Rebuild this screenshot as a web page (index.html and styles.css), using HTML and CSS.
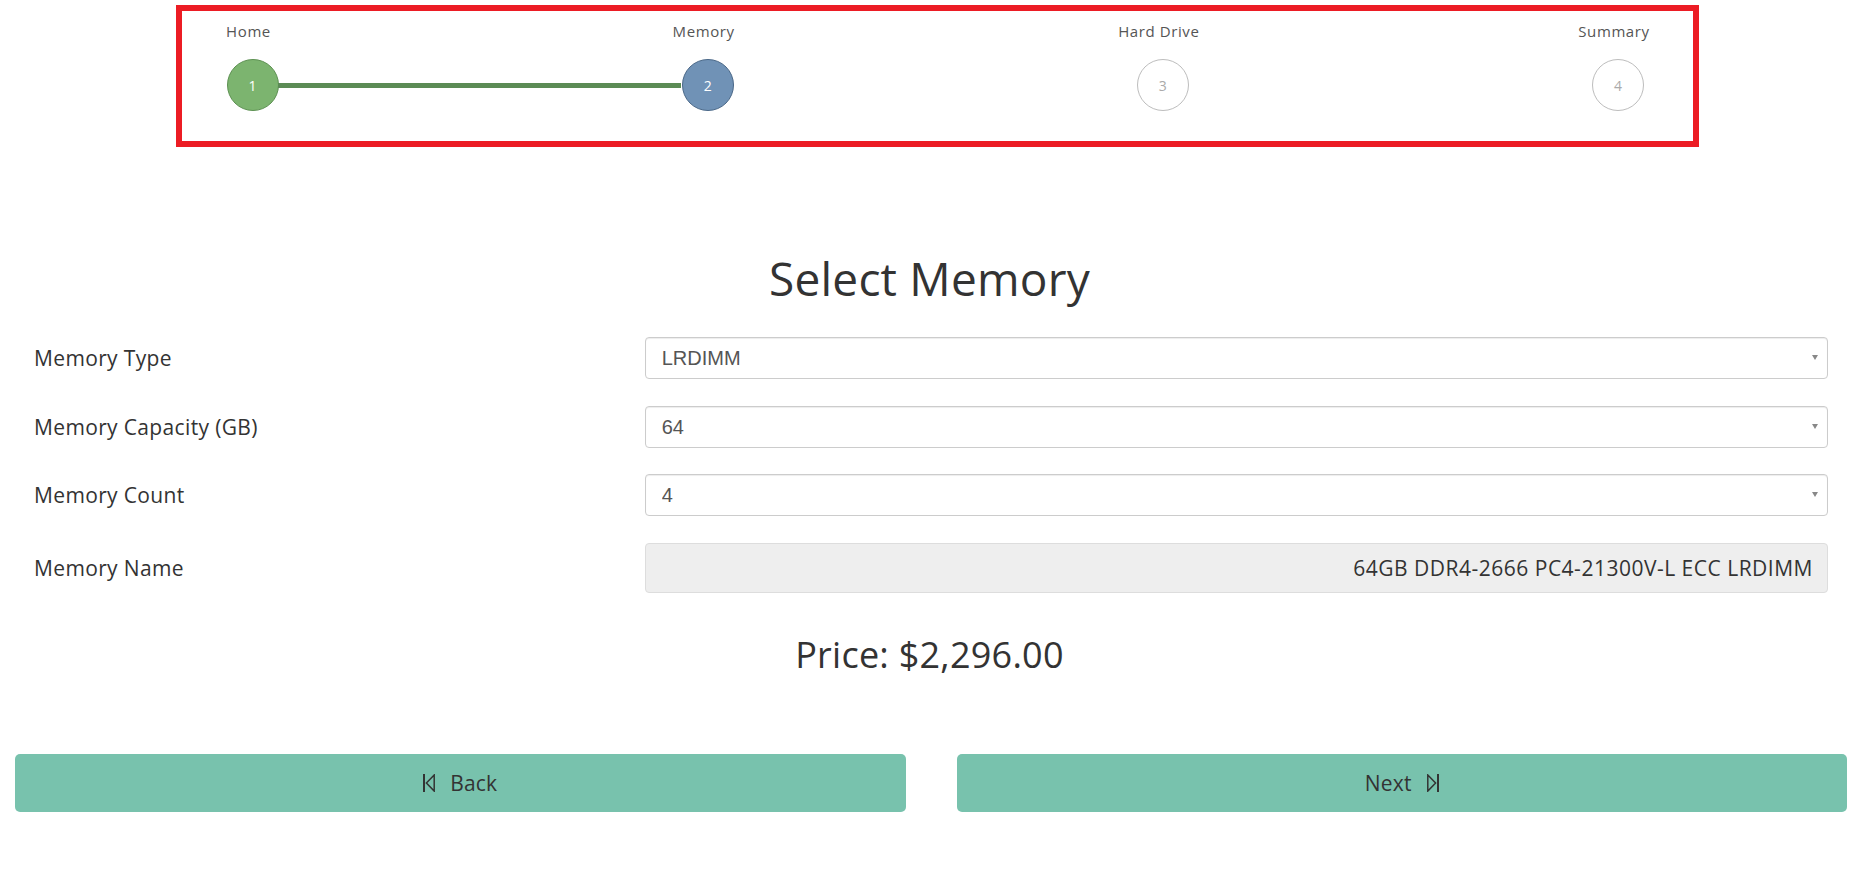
FILE: index.html
```html
<!DOCTYPE html>
<html lang="en">
<head>
<meta charset="utf-8">
<title>Select Memory</title>
<link rel="stylesheet" href="styles.css">
</head>
<body>
  <div class="stepper">
    <div class="step">
      <div class="step-label">Home</div>
      <div class="step-dot step-dot--done step-dot--link">1</div>
    </div>
    <div class="step">
      <div class="step-label">Memory</div>
      <div class="step-dot step-dot--active">2</div>
    </div>
    <div class="step">
      <div class="step-label">Hard Drive</div>
      <div class="step-dot">3</div>
    </div>
    <div class="step">
      <div class="step-label">Summary</div>
      <div class="step-dot">4</div>
    </div>
  </div>

  <h1 class="title">Select Memory</h1>

  <form class="form">
    <div class="field-row">
      <label class="field-label" for="mtype">Memory Type</label>
      <div class="field-cell">
        <div class="select-wrap">
          <select class="select" id="mtype"><option>LRDIMM</option></select>
        </div>
      </div>
    </div>
    <div class="field-row">
      <label class="field-label" for="mcap">Memory Capacity (GB)</label>
      <div class="field-cell">
        <div class="select-wrap">
          <select class="select" id="mcap"><option>64</option></select>
        </div>
      </div>
    </div>
    <div class="field-row">
      <label class="field-label" for="mcount">Memory Count</label>
      <div class="field-cell">
        <div class="select-wrap">
          <select class="select" id="mcount"><option>4</option></select>
        </div>
      </div>
    </div>
    <div class="field-row">
      <label class="field-label">Memory Name</label>
      <div class="field-cell">
        <div class="readonly">64GB DDR4-2666 PC4-21300V-L ECC LRDIMM</div>
      </div>
    </div>
  </form>

  <div class="price">Price: $2,296.00</div>

  <div class="actions">
    <button class="btn" type="button">
      <svg class="btn-icon" width="12" height="18" viewBox="0 0 12 18" fill="none" stroke="#333" stroke-linejoin="miter">
        <line x1="1" y1="0" x2="1" y2="18" stroke-width="2"/>
        <polygon points="11.2,0.9 3.4,9 11.2,17.1" stroke-width="1.5"/>
      </svg>
      <span>Back</span>
    </button>
    <button class="btn" type="button">
      <span>Next</span>
      <svg class="btn-icon" width="12" height="18" viewBox="0 0 12 18" fill="none" stroke="#333" stroke-linejoin="miter">
        <polygon points="0.8,0.9 8.6,9 0.8,17.1" stroke-width="1.5"/>
        <line x1="11" y1="0" x2="11" y2="18" stroke-width="2"/>
      </svg>
    </button>
  </div>
</body>
</html>
```

FILE: styles.css
```css
* {
  box-sizing: border-box;
}

body {
  margin: 0;
  background: #ffffff;
  font-family: "Open Sans", "Liberation Sans", sans-serif;
  color: #333333;
}

/* ---------- stepper ---------- */
.stepper {
  margin: 5px 0 0 176px;
  width: 1523px;
  border: 6px solid #ec1c24;
  padding: 10px 25px 30px 20.5px;
  display: flex;
  justify-content: space-between;
}

.step {
  width: 100px;
  display: flex;
  flex-direction: column;
  align-items: center;
}

.step-label {
  font-size: 15px;
  line-height: 20px;
  letter-spacing: 0.6px;
  padding-right: 8px;
  color: #555555;
  white-space: nowrap;
}

.step-dot {
  position: relative;
  z-index: 1;
  margin-top: 18px;
  width: 52px;
  height: 52px;
  border-radius: 50%;
  border: 1px solid #bdbdbd;
  background: #ffffff;
  color: #aaaaaa;
  font-size: 14px;
  display: flex;
  align-items: center;
  justify-content: center;
}

.step-dot--done {
  background: #7cb46f;
  border-color: #5d9152;
  color: #ffffff;
}

.step-dot--active {
  background: #7092b6;
  border-color: #4a6888;
  color: #ffffff;
}

.step-dot--link::after {
  content: "";
  position: absolute;
  left: 100%;
  top: 50%;
  margin-top: -2.5px;
  width: 403px;
  height: 5px;
  background: #5b8b55;
}

/* ---------- title ---------- */
.title {
  margin: 103px 0 31px;
  font-size: 46px;
  line-height: 56px;
  font-weight: 400;
  letter-spacing: 0.2px;
  text-align: center;
  color: #333333;
}

/* ---------- form ---------- */
.form {
  padding: 0 12px 0 15px;
  display: flex;
  flex-direction: column;
  gap: 26.7px;
}

.field-row {
  display: grid;
  grid-template-columns: 1fr 2fr;
  align-items: center;
}

.field-label {
  padding: 0 19px;
  font-size: 21px;
  letter-spacing: 0.35px;
  color: #333333;
}

.field-cell {
  padding: 0 19px;
}

.select-wrap {
  position: relative;
}

.select-wrap::after {
  content: "";
  position: absolute;
  right: 10px;
  top: 18px;
  border-left: 3.5px solid transparent;
  border-right: 3.5px solid transparent;
  border-top: 5px solid #888888;
  pointer-events: none;
}

.select {
  -webkit-appearance: none;
  appearance: none;
  display: block;
  width: 100%;
  height: 42px;
  margin: 0;
  padding: 0 30px 0 16px;
  border: 1px solid #cccccc;
  border-radius: 4px;
  background: #ffffff;
  box-shadow: inset 0 1px 1px rgba(0, 0, 0, 0.075);
  font-family: "Liberation Sans", Arial, sans-serif;
  font-size: 20px;
  color: #555555;
}

.readonly {
  height: 50px;
  padding: 0 14px;
  border: 1px solid #dddddd;
  border-radius: 4px;
  background: #eeeeee;
  display: flex;
  align-items: center;
  justify-content: flex-end;
  font-size: 21px;
  letter-spacing: 0.5px;
  color: #333333;
  white-space: nowrap;
}

/* ---------- price ---------- */
.price {
  margin-top: 40px;
  font-size: 36px;
  line-height: 44px;
  letter-spacing: 0.25px;
  text-align: center;
  color: #333333;
}

/* ---------- actions ---------- */
.actions {
  margin-top: 77px;
  padding: 0 12px 0 15px;
  display: flex;
  gap: 51px;
}

.btn {
  flex: 1 1 0;
  height: 58px;
  border: none;
  border-radius: 5px;
  background: #78c2ad;
  color: #333333;
  font-family: "Open Sans", "Liberation Sans", sans-serif;
  font-size: 21px;
  letter-spacing: 0.2px;
  display: flex;
  align-items: center;
  justify-content: center;
  gap: 15px;
  cursor: pointer;
}

.btn-icon {
  display: block;
  flex: none;
}
```
